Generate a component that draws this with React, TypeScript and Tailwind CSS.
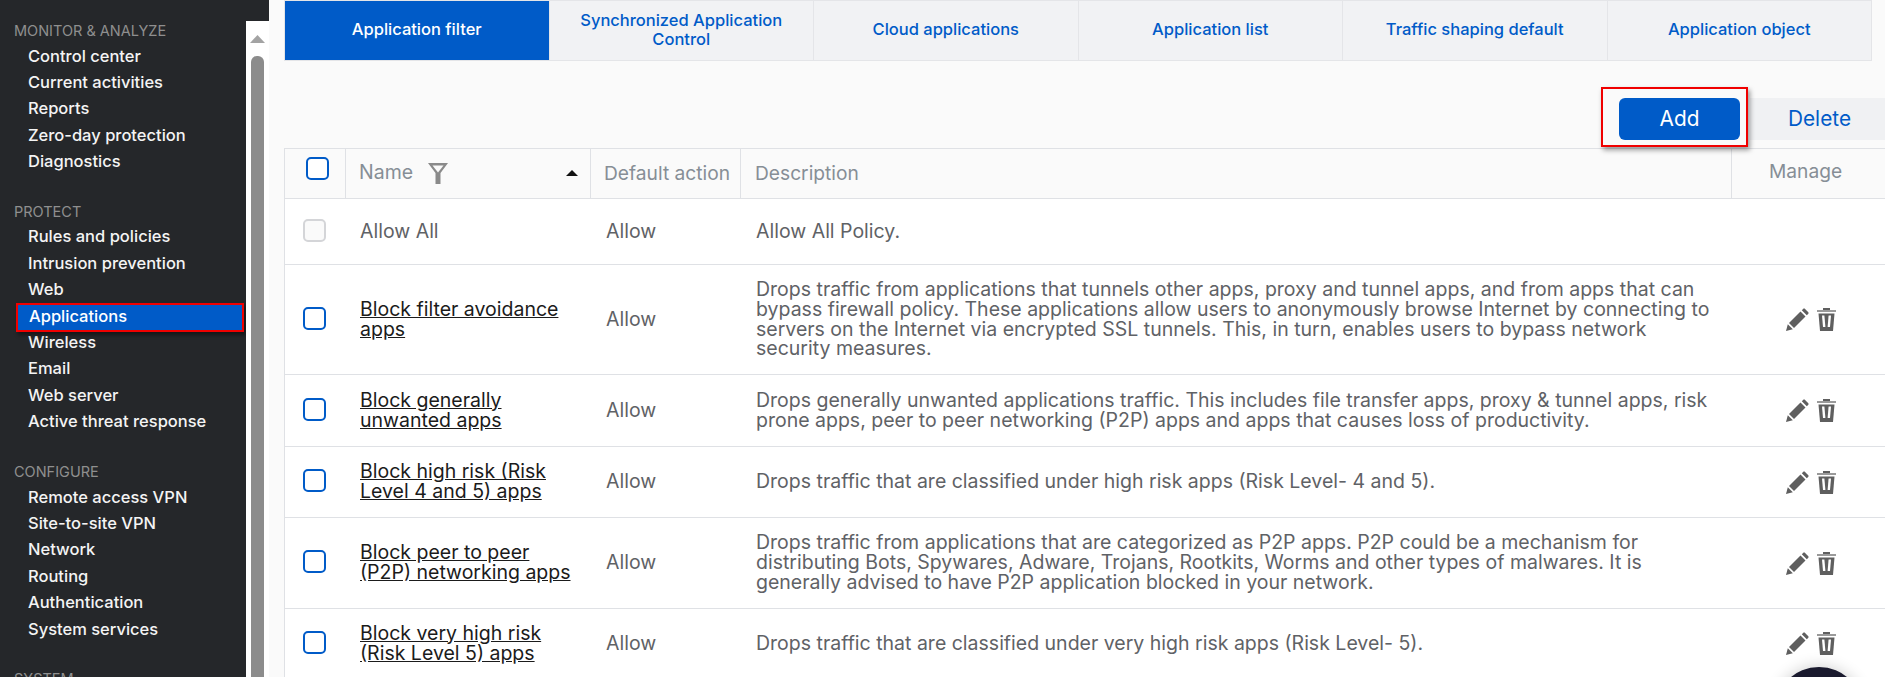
const font = "font-['Inter','Liberation_Sans',sans-serif]";

const sections: { title: string; items: string[] }[] = [
  { title: "MONITOR & ANALYZE", items: ["Control center", "Current activities", "Reports", "Zero-day protection", "Diagnostics"] },
  { title: "PROTECT", items: ["Rules and policies", "Intrusion prevention", "Web", "Applications", "Wireless", "Email", "Web server", "Active threat response"] },
  { title: "CONFIGURE", items: ["Remote access VPN", "Site-to-site VPN", "Network", "Routing", "Authentication", "System services"] },
  { title: "SYSTEM", items: [] },
];

const tabs: string[] = ["Application filter", "Synchronized Application Control", "Cloud applications", "Application list", "Traffic shaping default", "Application object"];

const rows: { h: string; name: string[]; desc: string[]; manage: boolean; disabled?: boolean }[] = [
  { h: "h-[66px]", name: ["Allow All"], desc: ["Allow All Policy."], manage: false, disabled: true },
  {
    h: "h-[110px]",
    name: ["Block filter avoidance", "apps"],
    desc: [
      "Drops traffic from applications that tunnels other apps, proxy and tunnel apps, and from apps that can",
      "bypass firewall policy. These applications allow users to anonymously browse Internet by connecting to",
      "servers on the Internet via encrypted SSL tunnels. This, in turn, enables users to bypass network",
      "security measures.",
    ],
    manage: true,
  },
  {
    h: "h-[72px]",
    name: ["Block generally", "unwanted apps"],
    desc: [
      "Drops generally unwanted applications traffic. This includes file transfer apps, proxy & tunnel apps, risk",
      "prone apps, peer to peer networking (P2P) apps and apps that causes loss of productivity.",
    ],
    manage: true,
  },
  {
    h: "h-[71px]",
    name: ["Block high risk (Risk", "Level 4 and 5) apps"],
    desc: ["Drops traffic that are classified under high risk apps (Risk Level- 4 and 5)."],
    manage: true,
  },
  {
    h: "h-[91px]",
    name: ["Block peer to peer", "(P2P) networking apps"],
    desc: [
      "Drops traffic from applications that are categorized as P2P apps. P2P could be a mechanism for",
      "distributing Bots, Spywares, Adware, Trojans, Rootkits, Worms and other types of malwares. It is",
      "generally advised to have P2P application blocked in your network.",
    ],
    manage: true,
  },
  {
    h: "h-[70px]",
    name: ["Block very high risk", "(Risk Level 5) apps"],
    desc: ["Drops traffic that are classified under very high risk apps (Risk Level- 5)."],
    manage: true,
  },
];

function Pencil() {
  return (
    <svg width="23" height="23" viewBox="0 0 23 23" fill="#5f5f5f">
      <path d="M0 23 L1.8 16.2 L6.8 21.2 Z" />
      <path d="M3 15 L14.5 3.5 L19.5 8.5 L8 20 Z" />
      <path d="M15.8 2.2 L17.3 0.7 Q18 0 18.8 0.7 L22.3 4.2 Q23 5 22.3 5.7 L20.8 7.2 Z" />
    </svg>
  );
}

function Trash() {
  return (
    <svg width="19" height="23" viewBox="0 0 19 23">
      <rect x="6" y="0" width="7" height="2" fill="#5f5f5f" />
      <rect x="0" y="2" width="19" height="2" fill="#9a9a9a" />
      <path d="M1.5 5.5 H17.5 L16 23 H3 Z" fill="#5f5f5f" />
      <path d="M5 7.5 H7.4 L8.4 19 H6 Z" fill="#ffffff" />
      <path d="M11.6 7.5 H14 L13 19 H10.6 Z" fill="#ffffff" />
    </svg>
  );
}

function Funnel() {
  return (
    <svg width="20" height="21" viewBox="0 0 20 21">
      <path d="M0 0 H20 L12.5 10 V21 H7.5 V10 Z" fill="#8a8a8a" />
      <path d="M4.5 2.5 H15.5 L10 9.6 Z" fill="#fafafa" />
    </svg>
  );
}

function Check({ disabled }: { disabled?: boolean }) {
  return (
    <span
      className={
        "block w-[23px] h-[23px] rounded-[5px] border-2 " +
        (disabled ? "border-[#d4d5d8] bg-[#fafafa]" : "border-[#005bc8] bg-white")
      }
    />
  );
}

export default function App() {
  return (
    <div className={`relative flex w-[1885px] h-[677px] overflow-hidden bg-[#fafafa] ${font}`}>
      <aside className="w-[269px] h-full shrink-0 flex flex-col">
        <div className="h-[21px] shrink-0 bg-[#25272a]" />
        <div className="flex flex-1 min-h-0">
          <nav className="w-[246px] bg-[#25272a] flex flex-col gap-[27.5px] overflow-hidden">
            {sections.map((s) => (
              <div key={s.title}>
                <div className="h-[21.5px] pl-[14px] text-[14.5px] leading-[20px] text-[#8f8f8f]">{s.title}</div>
                {s.items.map((it) =>
                  it === "Applications" ? (
                    <div key={it} className="relative h-[26.4px] text-[16.5px] font-medium leading-[26.4px] text-white">
                      <div className="absolute left-[16px] right-[2px] top-0 h-[29px] border-2 border-[#f00000] bg-[#005bc8] pl-[11px] leading-[23px] shadow-[2px_3px_4px_rgba(0,0,0,0.45)]">
                        {it}
                      </div>
                    </div>
                  ) : (
                    <div key={it} className="h-[26.4px] pl-[28px] text-[16.5px] font-medium leading-[26.4px] text-[#f4f4f4]">
                      {it}
                    </div>
                  )
                )}
              </div>
            ))}
          </nav>
          <div className="w-[23px] bg-white flex flex-col">
            <svg className="ml-[4px] mt-[14px] shrink-0" width="15" height="8" viewBox="0 0 15 8">
              <path d="M7.5 0 L15 8 H0 Z" fill="#a3a3a3" />
            </svg>
            <div className="ml-[5px] mt-[13px] w-[13px] flex-1 rounded-t-[6px] bg-[#8c8c8c]" />
          </div>
        </div>
      </aside>

      <main className="flex-1 min-w-0 pl-[15px]">
        <div className="flex w-[1588px] h-[61px] border border-[#e4e5e8] bg-[#f1f2f4]">
          {tabs.map((t, i) => (
            <div
              key={t}
              className={
                "flex-1 flex items-center justify-center text-center px-[20px] pb-[1px] text-[16.5px] font-medium leading-[19.5px] " +
                (i === 0 ? "bg-[#005bc8] text-white" : "text-[#005bc8] border-l border-[#e4e5e8]")
              }
            >
              {t}
            </div>
          ))}
        </div>

        <div className="h-[87px] flex items-start justify-end pt-[37px]">
          <div className="relative mr-[10px] w-[121px] h-[42px]">
            <div className="absolute -left-[18px] -right-[8px] -top-[11px] -bottom-[7px] border-2 border-[#f00000] shadow-[2px_3px_5px_rgba(0,0,0,0.4)] bg-[#fafafa]" />
            <button className="relative w-full h-full rounded-[6px] bg-[#005bc8] text-white text-[20.8px] leading-[42px]">Add</button>
          </div>
          <button className="w-[135px] h-[42px] pl-[4px] bg-[#f0f1f3] text-[#005bc8] text-[20.8px] leading-[42px]">Delete</button>
        </div>

        <div className="border-l border-[#dfe1e5]">
          <div className="flex h-[51px] border-y border-[#dfe1e5] bg-[#fafafa] text-[19.2px] text-[#868e96]">
            <div className="w-[61px] flex items-start pl-[21px] pt-[8px] border-r border-[#dfe1e5]">
              <Check />
            </div>
            <div className="w-[245px] flex items-start pl-[13px] pt-[13px] border-r border-[#dfe1e5] relative">
              <span className="text-[19.5px] leading-[20px]">Name</span>
              <span className="ml-[15px] mt-[1px]"><Funnel /></span>
              <svg className="absolute left-[220px] top-[21px]" width="12" height="6" viewBox="0 0 12 6">
                <path d="M6 0 L12 6 H0 Z" fill="#111" />
              </svg>
            </div>
            <div className="w-[150px] flex items-center pl-[13px] border-r border-[#dfe1e5] whitespace-nowrap">Default action</div>
            <div className="w-[991px] flex items-center pl-[14px] border-r border-[#dfe1e5]">Description</div>
            <div className="flex-1 flex items-center pl-[37px] pb-[4px]">Manage</div>
          </div>

          {rows.map((r) => (
            <div key={r.name[0]} className={`flex ${r.h} items-center border-b border-[#dfe1e5] bg-white text-[19.5px] leading-[19.7px] text-[#5f6266]`}>
              <div className="w-[61px] pl-[18px] pb-[3px] shrink-0">
                <Check disabled={r.disabled} />
              </div>
              <div className="w-[245px] pl-[14px] shrink-0 whitespace-nowrap">
                {r.disabled ? (
                  r.name[0]
                ) : (
                  <a className="text-[#1b1b1b] underline">
                    {r.name[0]}
                    <br />
                    {r.name[1]}
                  </a>
                )}
              </div>
              <div className="w-[150px] pl-[15px] shrink-0">Allow</div>
              <div className="w-[991px] pl-[15px] shrink-0 whitespace-nowrap">
                {r.desc.map((d) => (
                  <div key={d}>{d}</div>
                ))}
              </div>
              {r.manage && (
                <div className="flex items-center gap-[8px] pl-[54px]">
                  <Pencil />
                  <Trash />
                </div>
              )}
            </div>
          ))}
        </div>
      </main>

      <div className="absolute left-[1775px] top-[667px] w-[88px] h-[88px] rounded-full bg-[#1a1a2e] shadow-[0_0_16px_rgba(0,0,0,0.2)]" />
    </div>
  );
}
